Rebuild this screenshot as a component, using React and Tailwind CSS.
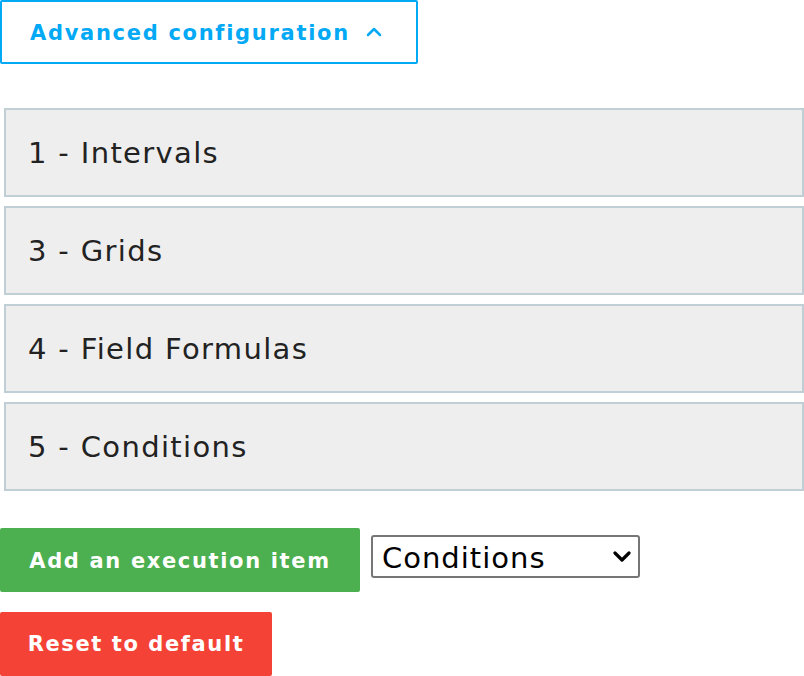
export default function App() {
  const sections = ["1 - Intervals", "3 - Grids", "4 - Field Formulas", "5 - Conditions"];
  return (
    <div className="w-[804px] overflow-hidden bg-white" style={{ fontFamily: '"DejaVu Sans", Verdana, sans-serif' }}>
      <button className="flex h-[64px] w-[418px] items-center rounded-[2px] border-2 border-[#03a9f4] pl-[28px] pt-[3px] text-[21px] font-bold tracking-[1.7px] text-[#03a9f4]">
        Advanced configuration
        <svg className="ml-[16px] -mt-[3px]" width="16" height="10" viewBox="0 0 16 10" fill="none">
          <path d="M2 8 L8 2 L14 8" stroke="#03a9f4" strokeWidth="2.5" strokeLinecap="round" strokeLinejoin="round" />
        </svg>
      </button>

      <div className="mt-[44px] ml-[4px] flex flex-col gap-[9px]">
        {sections.map((s) => (
          <div key={s} className="flex h-[89px] items-center border-2 border-[#c0cfd6] bg-[#eeeeee] pl-[22px] pt-[2px] text-[29px] tracking-[1.35px] text-[#222222]">
            {s}
          </div>
        ))}
      </div>

      <div className="mt-[37px] flex items-start gap-[11px]">
        <button className="h-[64px] w-[360px] rounded-[2px] bg-[#4caf50] pt-[3px] text-[21px] font-bold tracking-[1.65px] text-white">
          Add an execution item
        </button>
        <select
          defaultValue="Conditions"
          className="mt-[7px] h-[43px] w-[269px] appearance-none rounded-[3px] border-2 border-[#767676] bg-white pl-[9px] text-[29px] tracking-[1px] text-black"
          style={{
            backgroundImage:
              "url(\"data:image/svg+xml;utf8,<svg xmlns='http://www.w3.org/2000/svg' width='18' height='11' viewBox='0 0 18 11'><path d='M2 2 L9 9 L16 2' stroke='black' stroke-width='3.2' fill='none' stroke-linecap='round' stroke-linejoin='round'/></svg>\")",
            backgroundRepeat: "no-repeat",
            backgroundPosition: "right 7px center",
          }}
        >
          <option>Intervals</option>
          <option>Grids</option>
          <option>Field Formulas</option>
          <option>Conditions</option>
        </select>
      </div>

      <button className="mt-[20px] h-[64px] w-[272px] rounded-[2px] bg-[#f44336] pt-[2px] text-[21px] font-bold tracking-[1.6px] text-white">
        Reset to default
      </button>
    </div>
  );
}
